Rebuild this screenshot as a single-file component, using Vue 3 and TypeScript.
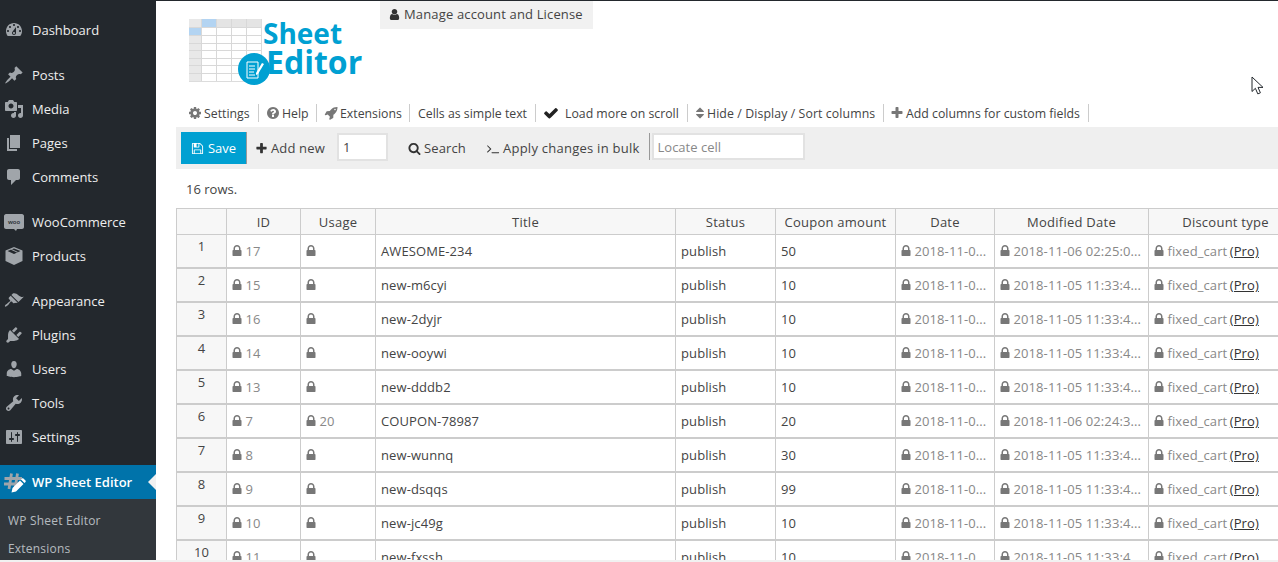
<template>
  <div class="page">
    <aside class="sidebar">
      <ul v-for="(group, g) in menuGroups" :key="g" class="menu-group">
        <li v-for="item in group" :key="item.label" class="menu-item">
          <svg class="menu-icon" viewBox="0 0 20 20">
            <path :d="item.icon" />
            <text v-if="item.label === 'WooCommerce'" class="woo-text" x="10" y="11.5" text-anchor="middle">woo</text>
          </svg>
          <span>{{ item.label }}</span>
        </li>
      </ul>
      <div class="menu-item menu-item--active">
        <svg class="menu-icon" viewBox="0 0 20 20">
          <path class="hash" d="M7.5 1.500L5 17M13.500 1.500L11 17M0.500 6.500H18M0 12H15" />
          <path class="pencil" d="M16 8.500l3.500 3.500-7.500 7.500-4.500 1 1-4.500zM17 7.500l1-1c.4-.4 1-.4 1.400 0l2.100 2.100c.4.4.4 1 0 1.400l-1 1z" />
        </svg>
        <span>WP Sheet Editor</span>
        <i class="active-arrow"></i>
      </div>
      <ul class="submenu">
        <li>WP Sheet Editor</li>
        <li>Extensions</li>
      </ul>
    </aside>

    <main class="content">
      <header class="head">
        <div class="logo">
          <svg class="logo-grid" viewBox="0 0 175 70" width="175" height="70">
            <rect x="0.500" y="0.500" width="72" height="62" fill="#ffffff" stroke="#dcdcdc" />
            <rect x="0" y="0" width="72" height="8" fill="#e4e4e4" />
            <rect x="0" y="0" width="12" height="62" fill="#e8e8e8" />
            <rect x="12" y="0" width="15" height="8" fill="#b3d4f2" />
            <rect x="0" y="8" width="12" height="8" fill="#b3d4f2" />
            <path d="M0 8.500h72M0 16.500h72M0 24.500h72M0 31.500h72M0 39.500h72M0 46.500h72M0 54.500h72M12.500 0v62M27.500 0v62M42.500 0v62M57.500 0v62" stroke="#d8d8d8" fill="none" />
            <circle cx="65" cy="50" r="16" fill="#00a0d2" />
            <path d="M58 43h11v16H58z" fill="none" stroke="#fff" stroke-width="1" />
            <path d="M60 47h6M60 50h6M60 53h5M60 56h6" stroke="#fff" stroke-width="1" />
            <path d="M67 54l6-10 2 1-6 10-2 1z" fill="#fff" />
          </svg>
          <span class="logo-sheet">Sheet</span>
          <span class="logo-editor">Editor</span>
        </div>
        <a class="account">
          <svg class="fa" viewBox="0 0 1792 1792"><path :d="fa.user" /></svg>
          Manage account and License
        </a>
      </header>

      <nav class="links">
        <a v-for="link in links" :key="link.label" class="link" :style="{ width: link.width + 'px' }">
          <svg v-if="link.icon" class="fa" :class="link.cls" viewBox="0 0 1792 1792"><path :d="link.icon" /></svg>
          {{ link.label }}
        </a>
      </nav>

      <div class="actions">
        <button class="save">
          <svg class="fa fa--white" viewBox="0 0 1792 1792"><path :d="fa.save" /></svg>
          Save
        </button>
        <span class="action action--add">
          <svg class="fa fa--dark" viewBox="0 0 1792 1792"><path :d="fa.plus" /></svg>
          Add new
        </span>
        <input class="field field--count" value="1" />
        <span class="action action--search">
          <svg class="fa fa--dark" viewBox="0 0 1792 1792"><path :d="fa.search" /></svg>
          Search
        </span>
        <span class="action action--bulk">
          <svg class="fa fa--dark fa--term" viewBox="0 0 1792 1792"><path :d="fa.terminal" /></svg>
          Apply changes in bulk
        </span>
        <input class="field field--locate" placeholder="Locate cell" />
      </div>

      <p class="count">16 rows.</p>

      <div class="sheet">
        <table>
          <colgroup>
            <col v-for="w in columnWidths" :key="w.key" :style="{ width: w.width + 'px' }" />
          </colgroup>
          <thead>
            <tr>
              <th></th>
              <th v-for="c in columns" :key="c">{{ c }}</th>
            </tr>
          </thead>
          <tbody>
            <tr v-for="(row, i) in rows" :key="row.id">
              <td class="num"><span>{{ i + 1 }}</span></td>
              <td class="locked"><svg class="fa fa--lock" viewBox="0 0 1792 1792"><path :d="fa.lock" /></svg> {{ row.id }}</td>
              <td class="locked"><svg class="fa fa--lock" viewBox="0 0 1792 1792"><path :d="fa.lock" /></svg> {{ row.usage }}</td>
              <td>{{ row.title }}</td>
              <td>publish</td>
              <td>{{ row.amount }}</td>
              <td class="locked"><svg class="fa fa--lock" viewBox="0 0 1792 1792"><path :d="fa.lock" /></svg> 2018-11-0...</td>
              <td class="locked"><svg class="fa fa--lock" viewBox="0 0 1792 1792"><path :d="fa.lock" /></svg> {{ row.modified }}</td>
              <td class="locked"><svg class="fa fa--lock" viewBox="0 0 1792 1792"><path :d="fa.lock" /></svg> fixed_cart <a class="pro">(Pro)</a></td>
            </tr>
          </tbody>
        </table>
      </div>

      <svg class="cursor" viewBox="0 0 14 20" width="14" height="20">
        <path d="M1 1v14.500l3.400-3.200 2.400 5.600 2.600-1.100-2.400-5.400h5z" fill="#fff" stroke="#23282d" stroke-width="1" />
      </svg>
    </main>
  </div>
</template>

<script setup lang="ts">
interface Row {
  id: number
  usage: string
  title: string
  amount: number
  modified: string
}

const dash = {
  dashboard: 'M3.76 16h12.48c1.1-1.37 1.76-3.11 1.76-5 0-4.42-3.58-8-8-8s-8 3.58-8 8c0 1.89.66 3.63 1.76 5zM10 4c.55 0 1 .45 1 1s-.45 1-1 1-1-.45-1-1 .45-1 1-1zM6 6c.55 0 1 .45 1 1s-.45 1-1 1-1-.45-1-1 .45-1 1-1zm8 0c.55 0 1 .45 1 1s-.45 1-1 1-1-.45-1-1 .45-1 1-1zm-5.37 5.55L12 7v6c0 1.1-.9 2-2 2s-2-.9-2-2c0-.57.24-1.08.63-1.45zM4 10c.55 0 1 .45 1 1s-.45 1-1 1-1-.45-1-1 .45-1 1-1zm12 0c.55 0 1 .45 1 1s-.45 1-1 1-1-.45-1-1 .45-1 1-1zm-5 3c0-.55-.45-1-1-1s-1 .45-1 1 .45 1 1 1 1-.45 1-1z',
  post: 'M10.44 3.02l1.82-1.82 6.36 6.35-1.83 1.82c-1.05-.68-2.48-.57-3.41.36l-.75.75c-.92.93-1.04 2.35-.35 3.41l-1.83 1.82-2.41-2.41-2.8 2.79c-.42.42-3.38 2.71-3.8 2.29s1.86-3.39 2.28-3.81l2.79-2.79L4.1 9.36l1.83-1.82c1.05.69 2.48.57 3.4-.36l.75-.75c.93-.92 1.05-2.35.36-3.41z',
  media: 'M13 11V4c0-.55-.45-1-1-1h-1.67L9 1H5L3.67 3H2c-.55 0-1 .45-1 1v7c0 .55.45 1 1 1h10c.55 0 1-.45 1-1zM7 4.5c1.38 0 2.5 1.12 2.5 2.5S8.38 9.5 7 9.5 4.5 8.38 4.5 7 5.62 4.5 7 4.5zM14 6h5v10.5c0 1.38-1.12 2.5-2.5 2.5S14 17.88 14 16.5s1.12-2.5 2.5-2.5c.17 0 .34.02.5.05V9h-3V6zm-4 8.05V13h2v3.5c0 1.38-1.12 2.5-2.5 2.5S7 17.88 7 16.5 8.12 14 9.5 14c.17 0 .34.02.5.05z',
  page: 'M6 15V2h10v13H6zm-1 1h8v2H3V5h2v11z',
  comments: 'M5 2h9c1.1 0 2 .9 2 2v7c0 1.1-.9 2-2 2h-2l-5 5v-5H5c-1.1 0-2-.9-2-2V4c0-1.1.9-2 2-2z',
  woo: 'M2 2h16c1 0 2 1 2 2v11c0 1-1 2-2 2h-5l-1 2-2-2H2c-1 0-2-1-2-2V4c0-1 1-2 2-2z',
  box: 'M10 1l8.5 3.5v10.5L10 19l-8.500-4V4.500zM3.500 5L10 8l6.500-3L10 2.600zM7 3.800l6.500 3 1-.5L8 3.300z',
  appearance: 'M14.48 11.06L7.41 3.99l1.5-1.5c.5-.56 2.3-.47 3.51.32 1.21.8 1.43 1.28 2.91 2.1 1.18.64 2.45 1.26 4.45.85zm-.71.71L6.7 4.7 4.93 6.47c-.39.39-.39 1.02 0 1.41l1.06 1.06c.39.39.39 1.03 0 1.42-.6.6-1.43 1.11-2.21 1.69-.35.26-.7.53-1.01.84C1.43 13.23.4 14.85 1.02 15.5c.54.57 2.23-.61 3.08-1.45.3-.3.58-.65.84-1 .58-.78 1.09-1.61 1.69-2.21.39-.39 1.02-.39 1.41 0l1.06 1.06c.39.39 1.02.39 1.41 0z',
  plugins: 'M13.11 4.36L9.87 7.6 8 5.73l3.24-3.24c.35-.34 1.05-.2 1.56.32.52.51.66 1.21.31 1.55zm-8 1.77l.91-1.12 9.01 9.01-1.19.84c-.71.71-2.63 1.16-3.82 1.16H6.14L4.9 17.26c-.59.59-1.54.59-2.12 0-.59-.58-.59-1.53 0-2.12l1.24-1.24v-3.88c0-1.13.4-3.19 1.09-3.89zm7.26 3.97l3.24-3.24c.34-.35 1.04-.21 1.55.31.52.51.66 1.21.31 1.55l-3.24 3.25z',
  users: 'M10 9.25c-2.27 0-2.73-3.44-2.73-3.44C7 4.02 7.82 2 9.97 2c2.16 0 2.98 2.02 2.71 3.81 0 0-.41 3.44-2.68 3.44zm0 2.57L12.72 10c2.39 0 4.52 2.33 4.52 4.53v2.49s-3.65 1.13-7.24 1.13c-3.65 0-7.24-1.13-7.24-1.13v-2.49c0-2.25 1.94-4.48 4.47-4.48z',
  tools: 'M16.68 9.77c-1.34 1.34-3.3 1.67-4.95.99l-5.41 6.52c-.99.99-2.59.99-3.58 0s-.99-2.59 0-3.57l6.52-5.42c-.68-1.65-.35-3.61.99-4.95 1.28-1.28 3.12-1.62 4.72-1.06l-2.89 2.89 2.82 2.82 2.86-2.87c.53 1.58.18 3.39-1.08 4.65zM3.81 16.21c.4.39 1.04.39 1.43 0 .4-.4.4-1.04 0-1.43-.39-.4-1.03-.4-1.43 0-.39.39-.39 1.03 0 1.43z',
  settings: 'M18 16V4c0-.55-.45-1-1-1H3c-.55 0-1 .45-1 1v12c0 .55.45 1 1 1h14c.55 0 1-.45 1-1zM8 11h1c.55 0 1 .45 1 1s-.45 1-1 1H8v1.5c0 .28-.22.5-.5.5s-.5-.22-.5-.5V13H6c-.55 0-1-.45-1-1s.45-1 1-1h1V5.5c0-.28.22-.5.5-.5s.5.22.5.5V11zm5-2h-1c-.55 0-1-.45-1-1s.45-1 1-1h1V5.5c0-.28.22-.5.5-.5s.5.22.5.5V7h1c.55 0 1 .45 1 1s-.45 1-1 1h-1v5.5c0 .28-.22.5-.5.5s-.5-.22-.5-.5V9z',
}

const fa = {
  user: 'M1536 1399q0 109-62.5 187t-150.5 78h-854q-88 0-150.5-78t-62.5-187q0-85 8.5-160.5t31.5-152 58.5-131 94-89 134.5-34.5q131 128 313 128t313-128q76 0 134.5 34.5t94 89 58.5 131 31.5 152 8.5 160.5zm-256-887q0 159-112.5 271.5t-271.5 112.5-271.5-112.5-112.5-271.5 112.5-271.5 271.5-112.5 271.5 112.5 112.5 271.5z',
  cog: 'M1152 896q0-106-75-181t-181-75-181 75-75 181 75 181 181 75 181-75 75-181zm512-109v222q0 12-8 23t-20 13l-185 28q-19 54-39 91 35 50 107 138 10 12 10 25t-9 23q-27 37-99 108t-94 71q-12 0-26-9l-138-108q-44 23-91 38-16 136-29 186-7 28-36 28h-222q-14 0-24.5-8.5t-11.5-21.5l-28-184q-49-16-90-37l-141 107q-10 9-25 9-14 0-25-11-126-114-165-168-7-10-7-23 0-12 8-23 15-21 51-66.5t54-70.5q-27-50-41-99l-183-27q-13-2-21-12.5t-8-23.5v-222q0-12 8-23t19-13l186-28q14-46 39-92-40-57-107-138-10-12-10-24 0-10 9-23 26-36 98.5-107.5t94.5-71.5q13 0 26 10l138 107q44-23 91-38 16-136 29-186 7-28 36-28h222q14 0 24.5 8.5t11.5 21.5l28 184q49 16 90 37l142-107q9-9 24-9 13 0 25 10 129 119 165 170 7 8 7 22 0 12-8 23-15 21-51 66.5t-54 70.5q26 50 41 98l183 28q13 2 21 12.5t8 23.5z',
  help: 'M1024 1376v-192q0-14-9-23t-23-9h-192q-14 0-23 9t-9 23v192q0 14 9 23t23 9h192q14 0 23-9t9-23zm256-672q0-88-55.5-163t-138.5-116-170-41q-243 0-371 213-15 24 8 42l132 100q7 6 19 6 16 0 25-12 53-68 86-92 34-24 86-24 48 0 85.5 26t37.5 59q0 38-20 61t-68 45q-63 28-115.5 86.5t-52.5 125.5v36q0 14 9 23t23 9h192q14 0 23-9t9-23q0-19 21.5-49.5t54.5-49.5q32-18 49-28.5t46-35 44.5-48 28-60.5 12.5-81zm384 192q0 209-103 385.5t-279.5 279.5-385.5 103-385.5-103-279.5-279.5-103-385.5 103-385.5 279.5-279.5 385.5-103 385.5 103 279.5 279.5 103 385.5z',
  rocket: 'M1504 448q0-40-28-68t-68-28-68 28-28 68 28 68 68 28 68-28 28-68zm224-288q0 249-75.5 430.5t-253.5 360.5q-81 80-195 176l-20 379q-2 16-16 26l-384 224q-7 4-16 4-12 0-23-9l-64-64q-13-14-8-32l85-276-281-281-276 85q-3 1-9 1-14 0-23-9l-64-64q-17-19-5-39l224-384q10-14 26-16l379-20q96-114 176-195 188-187 358-258t431-71q14 0 24 9.5t10 22.5z',
  check: 'M1671 566q0 40-28 68l-724 724-136 136q-28 28-68 28t-68-28l-136-136-362-362q-28-28-28-68t28-68l136-136q28-28 68-28t68 28l294 295 656-657q28-28 68-28t68 28l136 136q28 28 28 68z',
  sort: 'M1408 1088q0 26-19 45l-448 448q-19 19-45 19t-45-19l-448-448q-19-19-19-45t19-45 45-19h896q26 0 45 19t19 45zm0-384q0 26-19 45t-45 19h-896q-26 0-45-19t-19-45 19-45l448-448q19-19 45-19t45 19l448 448q19 19 19 45z',
  plus: 'M1600 736v192q0 40-28 68t-68 28h-416v416q0 40-28 68t-68 28h-192q-40 0-68-28t-28-68v-416h-416q-40 0-68-28t-28-68v-192q0-40 28-68t68-28h416v-416q0-40 28-68t68-28h192q40 0 68 28t28 68v416h416q40 0 68 28t28 68z',
  search: 'M1216 832q0-185-131.5-316.5t-316.5-131.5-316.5 131.5-131.5 316.5 131.5 316.5 316.5 131.5 316.5-131.5 131.5-316.5zm512 832q0 52-38 90t-90 38q-54 0-90-38l-343-342q-179 124-399 124-143 0-273.5-55.5t-225-150-150-225-55.5-273.5 55.5-273.5 150-225 225-150 273.5-55.5 273.5 55.5 225 150 150 225 55.5 273.5q0 220-124 399l343 343q37 37 37 90z',
  save: 'M512 1536h768v-384h-768v384zm896 0h128v-896q0-14-10-38.5t-20-34.5l-281-281q-10-10-34-20t-39-10v416q0 40-28 68t-68 28h-576q-40 0-68-28t-28-68v-416h-128v1280h128v-416q0-40 28-68t68-28h832q40 0 68 28t28 68v416zm-384-928v-320q0-13-9.5-22.5t-22.5-9.5h-192q-13 0-22.5 9.5t-9.5 22.5v320q0 13 9.5 22.5t22.5 9.5h192q13 0 22.5-9.5t9.5-22.5zm640 32v928q0 40-28 68t-68 28h-1344q-40 0-68-28t-28-68v-1344q0-40 28-68t68-28h928q40 0 88 20t76 48l280 280q28 28 48 76t20 88z',
  terminal: 'M649 983l-466 466q-10 10-23 10t-23-10l-50-50q-10-10-10-23t10-23l393-393-393-393q-10-10-10-23t10-23l50-50q10-10 23-10t23 10l466 466q10 10 10 23t-10 23zm1079 457v64q0 14-9 23t-23 9h-960q-14 0-23-9t-9-23v-64q0-14 9-23t23-9h960q14 0 23 9t9 23z',
  lock: 'M640 768h512v-192q0-106-75-181t-181-75-181 75-75 181v192zm832 96v576q0 40-28 68t-68 28h-960q-40 0-68-28t-28-68v-576q0-40 28-68t68-28h32v-192q0-184 132-316t316-132 316 132 132 316v192h32q40 0 68 28t28 68z',
}

const menuGroups = [
  [{ label: 'Dashboard', icon: dash.dashboard }],
  [
    { label: 'Posts', icon: dash.post },
    { label: 'Media', icon: dash.media },
    { label: 'Pages', icon: dash.page },
    { label: 'Comments', icon: dash.comments },
  ],
  [
    { label: 'WooCommerce', icon: dash.woo },
    { label: 'Products', icon: dash.box },
  ],
  [
    { label: 'Appearance', icon: dash.appearance },
    { label: 'Plugins', icon: dash.plugins },
    { label: 'Users', icon: dash.users },
    { label: 'Tools', icon: dash.tools },
    { label: 'Settings', icon: dash.settings },
  ],
]

const links = [
  { label: 'Settings', icon: fa.cog, width: 70, cls: '' },
  { label: 'Help', icon: fa.help, width: 58, cls: '' },
  { label: 'Extensions', icon: fa.rocket, width: 93, cls: '' },
  { label: 'Cells as simple text', icon: '', width: 126, cls: '' },
  { label: 'Load more on scroll', icon: fa.check, width: 152, cls: 'fa--check' },
  { label: 'Hide / Display / Sort columns', icon: fa.sort, width: 196, cls: 'fa--sort' },
  { label: 'Add columns for custom fields', icon: fa.plus, width: 205, cls: 'fa--plus' },
]

const columns = ['ID', 'Usage', 'Title', 'Status', 'Coupon amount', 'Date', 'Modified Date', 'Discount type']
const columnWidths = [50, 74, 75, 300, 100, 120, 99, 154, 154].map((width, key) => ({ width, key }))

const later = '2018-11-05 11:33:4...'
const rows: Row[] = [
  { id: 17, usage: '', title: 'AWESOME-234', amount: 50, modified: '2018-11-06 02:25:0...' },
  { id: 15, usage: '', title: 'new-m6cyi', amount: 10, modified: later },
  { id: 16, usage: '', title: 'new-2dyjr', amount: 10, modified: later },
  { id: 14, usage: '', title: 'new-ooywi', amount: 10, modified: later },
  { id: 13, usage: '', title: 'new-dddb2', amount: 10, modified: later },
  { id: 7, usage: '20', title: 'COUPON-78987', amount: 20, modified: '2018-11-06 02:24:3...' },
  { id: 8, usage: '', title: 'new-wunnq', amount: 30, modified: later },
  { id: 9, usage: '', title: 'new-dsqqs', amount: 99, modified: later },
  { id: 10, usage: '', title: 'new-jc49g', amount: 10, modified: later },
  { id: 11, usage: '', title: 'new-fxssh', amount: 10, modified: later },
]
</script>

<style>
html,
body {
  margin: 0;
  background: #f1f1f1;
}
</style>

<style scoped>
.page {
  display: flex;
  height: 560px;
  overflow: hidden;
  border-top: 1px solid #23282d;
  box-sizing: border-box;
  font-family: 'Open Sans', sans-serif;
  font-size: 13px;
  color: #444;
  background: #fff;
}

.sidebar {
  width: 156px;
  flex: none;
  background: #23282d;
  padding-top: 12px;
  box-sizing: border-box;
  color: #eee;
}

.menu-group {
  list-style: none;
  margin: 0 0 11px;
  padding: 0;
}

.menu-item {
  position: relative;
  display: flex;
  align-items: center;
  height: 34px;
  padding-left: 4px;
}

.menu-icon {
  width: 20px;
  height: 20px;
  margin-right: 8px;
  fill: #a0a5aa;
  flex: none;
  overflow: visible;
}

.woo-text {
  font-size: 6px;
  font-weight: 600;
  fill: #23282d;
}

.menu-item--active {
  background: #0073aa;
  color: #fff;
  font-weight: 600;
}

.hash {
  fill: none;
  stroke: #a0a5aa;
  stroke-width: 2.8;
}

.pencil {
  fill: #fff;
}

.active-arrow {
  position: absolute;
  right: 0;
  top: 9px;
  border: 8px solid transparent;
  border-right-color: #f1f1f1;
  border-left-width: 0;
}

.submenu {
  list-style: none;
  margin: 0;
  padding: 8px 0 0 8px;
  height: 61px;
  box-sizing: border-box;
  background: #32373c;
  color: rgba(240, 245, 250, 0.7);
  font-size: 12px;
  letter-spacing: 0.2px;
}

.submenu li {
  height: 28px;
  line-height: 28px;
}

.content {
  position: relative;
  flex: 1;
  min-width: 0;
  padding-left: 20px;
  overflow: hidden;
}

.head {
  display: flex;
  align-items: flex-start;
  height: 103px;
  padding-left: 13px;
}

.logo {
  position: relative;
  width: 191px;
  height: 70px;
  margin-top: 18px;
}

.logo-grid {
  display: block;
}

.logo-sheet,
.logo-editor {
  position: absolute;
  color: #00a0d2;
  font-weight: 700;
  line-height: 0.9;
}

.logo-sheet {
  left: 74px;
  top: 2.4px;
  font-size: 28px;
}

.logo-editor {
  left: 77px;
  top: 28.6px;
  font-size: 32px;
}

.account {
  display: flex;
  align-items: center;
  gap: 3px;
  box-sizing: border-box;
  width: 213px;
  height: 28px;
  padding: 0 0 2px 8px;
  background: #f1f1f1;
  letter-spacing: 0.15px;
}

.fa {
  width: 13px;
  height: 13px;
  flex: none;
  fill: #777;
}

.account .fa,
.fa--dark {
  fill: #333;
}

.fa--white {
  fill: #fff;
}

.links {
  display: flex;
  height: 18px;
  padding-left: 13px;
  margin-bottom: 5px;
  font-size: 12.3px;
}

.link {
  display: flex;
  align-items: center;
  gap: 2px;
  box-sizing: border-box;
  height: 18px;
  border-right: 1px solid #ccc;
  white-space: nowrap;
  flex: none;
}

.link + .link {
  padding-left: 8px;
}

.link:nth-child(6) {
  letter-spacing: 0.1px;
}

.link .fa {
  width: 14px;
  height: 14px;
  margin-left: -1px;
}

.link .fa--check {
  width: 16px;
  height: 16px;
  margin-right: 4px;
  fill: #222;
}

.link .fa--sort {
  margin-left: -3px;
  margin-right: -2px;
}

.link .fa--plus {
  margin-left: -2px;
}

.actions {
  display: flex;
  align-items: center;
  height: 42px;
  background: #efefef;
  padding-left: 5px;
  letter-spacing: 0.15px;
}

.save {
  display: flex;
  align-items: center;
  justify-content: center;
  gap: 4px;
  box-sizing: border-box;
  width: 66px;
  height: 32px;
  padding: 0;
  background: #00a0d2;
  color: #fff;
  border: 0;
  border-right: 1px solid #999;
  font: inherit;
}

.action {
  display: flex;
  align-items: center;
  gap: 3px;
  white-space: nowrap;
}

.action--add {
  margin-left: 8px;
}

.field {
  box-sizing: border-box;
  border: 2px solid #e2e2e2;
  background: #fff;
  font: inherit;
  color: #444;
  outline: 0;
  padding: 0 4px;
}

.field::placeholder {
  color: #888;
  opacity: 1;
}

.field--count {
  width: 51px;
  height: 28px;
  margin: 0 0 2px 12px;
}

.action--search,
.action--bulk {
  margin-left: 20px;
}

.action--bulk {
  letter-spacing: 0.25px;
}

.fa--term {
  width: 14px;
}

.field--locate {
  width: 153px;
  height: 27px;
  margin: 0 0 3px 12px;
  box-shadow: -2px 0 0 #efefef, -3px 0 0 #999;
}

.count {
  margin: 0;
  padding-left: 10px;
  height: 39px;
  line-height: 40px;
}

.sheet {
  width: 1126px;
}

table {
  table-layout: fixed;
  width: 1126px;
  border-collapse: separate;
  border-spacing: 0;
  border-top: 1px solid #ccc;
  border-left: 1px solid #ccc;
}

th {
  height: 25px;
  padding: 0;
  background: #f7f7f7;
  border-right: 1px solid #ccc;
  border-bottom: 1px solid #ccc;
  font-weight: 400;
  text-align: center;
  box-sizing: content-box;
  letter-spacing: 0.25px;
}

td {
  height: 32px;
  padding: 0 5px;
  border-right: 1px solid #ccc;
  border-bottom: 2px solid #ccc;
  white-space: nowrap;
  overflow: hidden;
  box-sizing: content-box;
  letter-spacing: 0.1px;
}

.num {
  padding: 0;
  background: #f7f7f7;
  text-align: center;
}

.num span {
  display: block;
  transform: translateY(-5px);
}

.locked {
  color: #888;
}

.fa--lock {
  width: 14px;
  height: 14px;
  margin: 0 -1.5px 0 -2.5px;
  vertical-align: -2px;
  fill: #777;
}

.pro {
  color: #333;
  text-decoration: underline;
  margin-left: -1px;
}

.cursor {
  position: absolute;
  left: 1095px;
  top: 75px;
}
</style>
